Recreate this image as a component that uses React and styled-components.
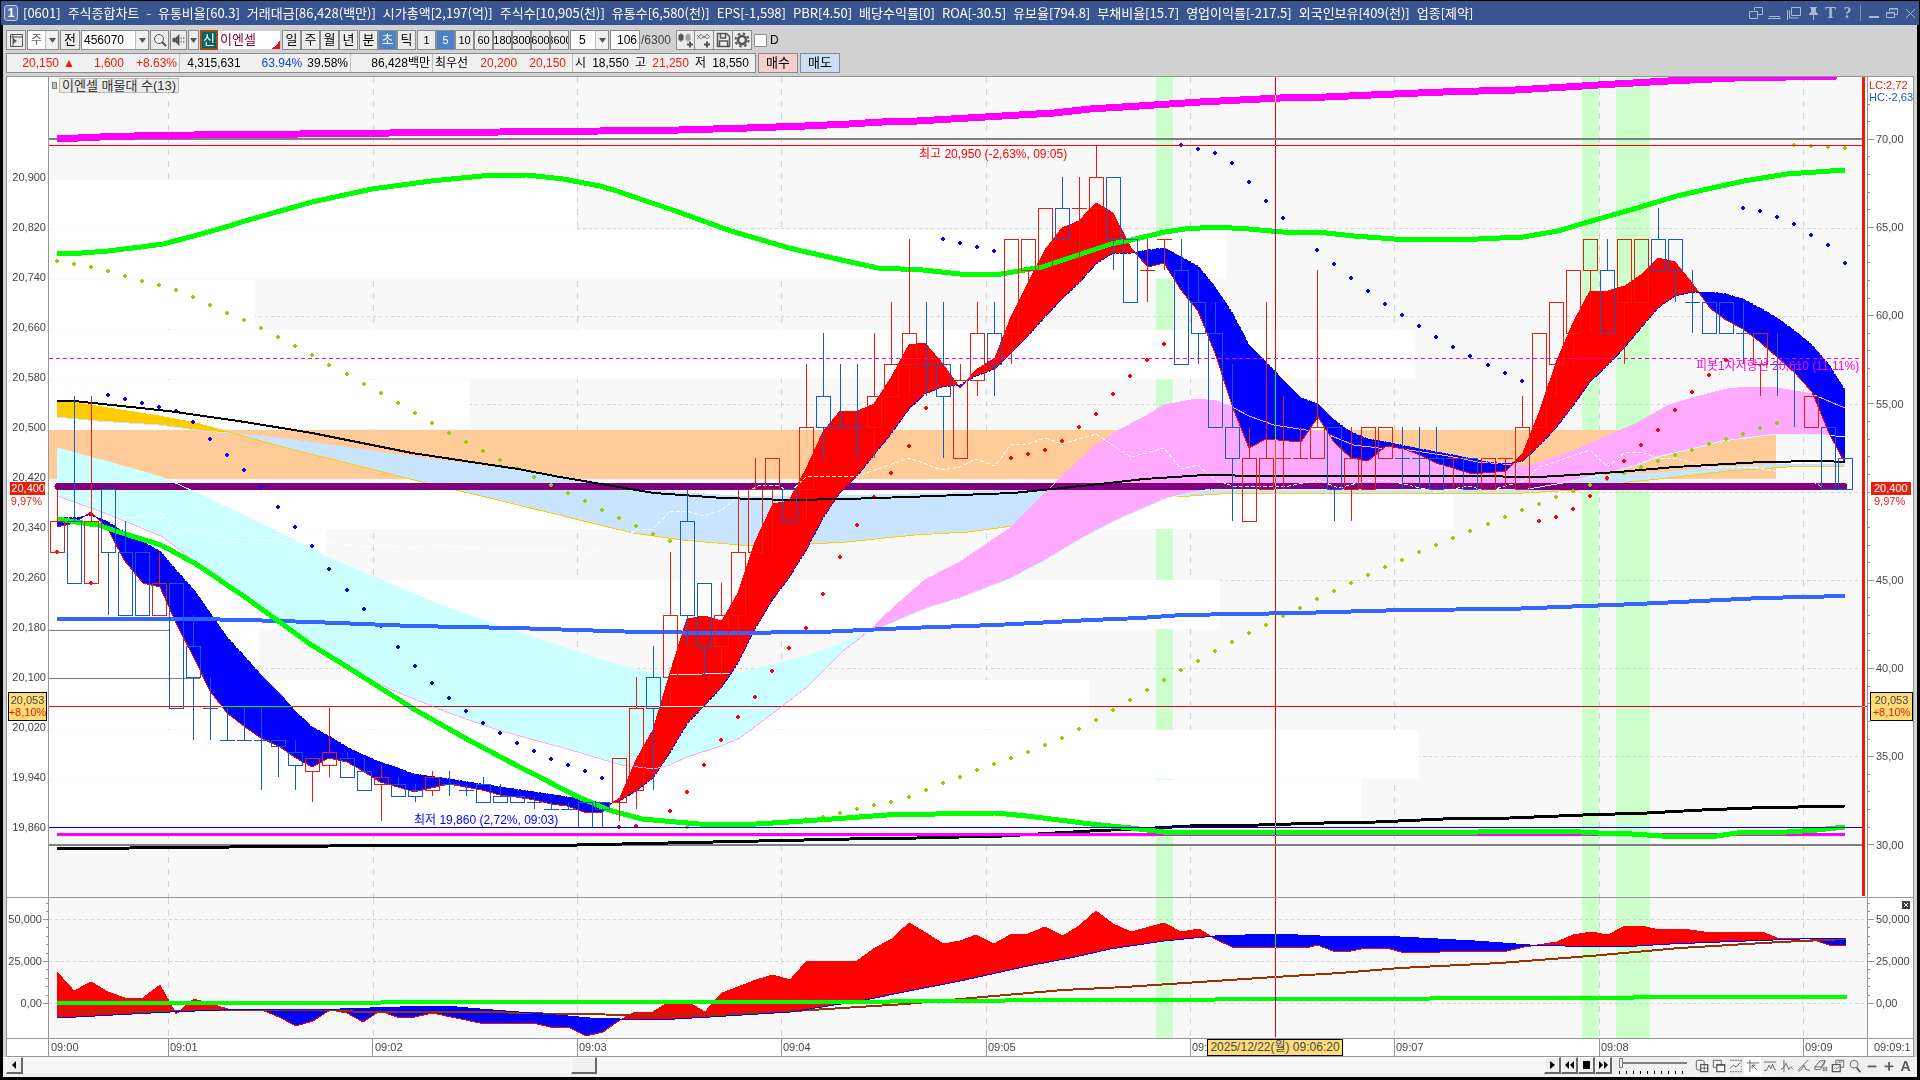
import React, { useState } from 'react'
import styled, { createGlobalStyle, css } from 'styled-components'

// ---------- data ----------

const INFO = ['[0601]', '주식종합차트', '-', '유통비율[60.3]', '거래대금[86,428(백만)]', '시가총액[2,197(억)]', '주식수[10,905(천)]', '유통수[6,580(천)]', 'EPS[-1,598]', 'PBR[4.50]', '배당수익률[0]', 'ROA[-30.5]', '유보율[794.8]', '부채비율[15.7]', '영업이익률[-217.5]', '외국인보유[409(천)]', '업종[제약]']

// color, top, bottom, high, low
const CANDLES = `r 20350 20300 20400 20300|b 20350 20250 20550 20250|r 20350 20250 20550 20250|b 20400 20300 20400 20200|b 20300 20200 20350 20200|b 20300 20200 20300 20200
r 20250 20200 20300 20200|b 20250 20050 20250 20050|b 20150 20100 20200 20000|b 20050 20050 20100 20000|b 20000 20000 20050 20000|b 20000 20000 20050 20000
b 20000 20000 20050 19920|b 20000 19990 20000 19940|b 19980 19960 20000 19920|r 19970 19950 19970 19900|r 19980 19960 20050 19940|b 19970 19940 19980 19940
b 19950 19920 19970 19920|r 19940 19930 19960 19870|b 19930 19910 19940 19910|b 19920 19910 19930 19900|r 19940 19920 19950 19910|b 19930 19930 19950 19910
b 19920 19920 19930 19910|b 19930 19900 19940 19900|b 19910 19900 19930 19900|b 19910 19900 19910 19900|b 19900 19900 19910 19890|b 19890 19890 19900 19890
b 19890 19890 19900 19890|b 19900 19860 19900 19860|b 19900 19890 19900 19860|r 19970 19900 19970 19870|r 20050 19920 20100 19890|b 20100 20050 20150 19920
r 20200 20100 20300 20050|b 20350 20200 20400 20150|b 20250 20150 20250 20100|r 20200 20150 20250 20100|r 20300 20200 20400 20150|r 20400 20300 20450 20300
r 20450 20400 20450 20300|b 20400 20350 20400 20350|r 20500 20400 20600 20350|b 20550 20500 20650 20450|b 20500 20500 20600 20500|b 20500 20500 20600 20450
r 20550 20500 20650 20450|r 20600 20550 20700 20550|r 20650 20600 20800 20550|b 20600 20600 20700 20550|b 20600 20550 20700 20450|r 20575 20450 20600 20450
r 20650 20575 20700 20550|b 20650 20600 20700 20550|r 20800 20650 20800 20600|r 20800 20750 20800 20700|r 20850 20750 20850 20750|b 20850 20800 20900 20800
r 20850 20850 20900 20750|r 20900 20850 20950 20800|b 20900 20800 20900 20750|b 20800 20700 20800 20700|r 20750 20750 20800 20700|r 20800 20800 20800 20750
b 20750 20600 20800 20600|b 20700 20650 20750 20600|b 20650 20500 20700 20500|b 20500 20450 20600 20350|r 20450 20350 20500 20350|r 20450 20400 20700 20400
r 20450 20450 20550 20400|r 20450 20450 20500 20450|r 20500 20450 20750 20450|b 20500 20400 20500 20350|r 20450 20400 20500 20350|r 20500 20400 20500 20400
r 20500 20450 20500 20450|b 20450 20450 20500 20400|b 20450 20450 20500 20400|b 20450 20400 20500 20400|r 20450 20450 20450 20400|b 20450 20400 20450 20400
r 20450 20400 20450 20400|r 20450 20450 20450 20400|r 20500 20400 20550 20400|r 20650 20500 20650 20500|r 20700 20600 20700 20550|r 20750 20650 20750 20600
r 20800 20750 20800 20650|b 20750 20650 20800 20650|r 20800 20700 20800 20600|r 20800 20700 20800 20700|b 20800 20750 20850 20750|b 20800 20750 20800 20700
b 20700 20700 20750 20650|b 20700 20650 20700 20650|b 20700 20650 20700 20650|b 20650 20650 20700 20600|r 20650 20600 20650 20550|b 20600 20600 20650 20550
b 20600 20600 20600 20500|r 20550 20500 20550 20500|b 20500 20400 20500 20400|b 20450 20400 20450 20400`
  .split(/[|\n]/)
  .map((c) => {
    const [color, top, bottom, high, low] = c.trim().split(' ')
    return { color, top: +top, bottom: +bottom, high: +high, low: +low }
  })

const LINES = {
  fast: '57,527 74,523 91,512 108,529 124,560 143,583 160,587 176,623 194,658 210,691 227,713 245,727 261,738 280,747 296,758 312,767 329,758 347,762 363,771 380,782 398,787 414,792 431,788 449,784 465,787 482,790 500,795 516,797 535,800 551,804 567,806 584,812 602,813 612,803 620,798 636,760 653,730 670,673 687,619 704,616 722,621 738,593 755,542 773,504 789,501 807,467 823,432 840,411 858,411 874,404 891,378 909,345 925,343 942,363 960,388 976,370 995,358 1011,317 1028,283 1045,250 1062,228 1079,221 1096,203 1113,213 1131,248 1148,267 1164,263 1181,290 1198,311 1215,353 1233,408 1249,448 1266,439 1301,442 1318,417 1334,442 1351,458 1368,461 1386,446 1404,449 1420,455 1436,463 1453,468 1472,474 1506,471 1523,453 1539,413 1556,363 1573,323 1590,291 1608,291 1625,286 1641,275 1658,258 1675,262 1692,283 1710,308 1726,320 1743,329 1760,342 1777,357 1795,373 1812,392 1829,433 1845,463',
  slow: '57,517 74,518 91,515 108,522 124,532 143,542 160,551 176,570 194,590 210,613 227,637 245,657 261,675 280,694 296,712 312,727 329,736 347,747 363,755 380,762 398,768 414,774 449,779 500,787 535,792 567,797 602,803 612,803 620,801 636,791 653,778 670,753 687,724 704,706 722,687 738,663 755,629 773,599 789,578 807,549 823,518 840,493 858,475 874,455 891,434 909,409 925,394 942,387 960,385 976,376 995,369 1011,353 1028,336 1045,317 1062,299 1079,283 1096,264 1113,253 1131,253 1148,250 1164,248 1181,257 1198,266 1215,287 1233,314 1249,345 1266,362 1283,380 1301,398 1318,404 1334,420 1351,432 1368,439 1386,442 1420,449 1453,455 1488,462 1506,464 1523,461 1539,446 1556,428 1573,406 1590,382 1608,365 1625,347 1641,328 1658,308 1675,296 1692,292 1710,292 1726,294 1743,299 1760,308 1777,318 1795,331 1812,345 1829,365 1845,390',
  gold: '57,401 74,402 102,407 159,416 196,423 229,432 261,441 294,450 347,463 422,482 494,499 571,518 633,533 682,540 740,545 793,545 846,542 915,535 968,532 1013,526 1062,517 1131,504 1172,497 1190,496 1234,493 1289,494 1523,493 1578,490 1630,482 1677,477 1727,471 1787,467 1845,466',
  sky: '57,417 98,421 159,425 204,431 229,433 286,439 408,456 531,472 604,483 674,492 735,496 805,497 870,495 952,493 1013,490 1050,488 1131,481 1200,477 1290,477 1553,478 1608,475 1657,473 1717,467 1787,464 1845,464',
  cyan: '57,448 98,459 161,477 180,485 233,510 294,540 327,557 367,574 433,602 490,623 571,650 601,660 650,673 666,675 740,673 772,665 807,656 838,645 870,631 887,625 927,608 960,598 1009,579 1042,562 1082,538 1119,519 1167,498 1210,489 1289,490 1528,489 1563,483 1608,473 1637,465 1657,457 1687,450 1722,441 1777,434 1817,434 1845,437',
  pink: '57,496 102,512 161,536 180,550 196,563 245,597 310,644 349,668 392,690 449,713 498,730 571,750 621,765 654,769 670,765 687,757 721,746 740,738 772,714 807,687 842,652 870,630 895,606 925,580 960,562 1009,529 1050,488 1074,465 1095,446 1119,430 1148,415 1164,405 1197,399 1217,401 1234,408 1249,416 1274,425 1312,431 1324,433 1354,445 1379,448 1409,450 1448,456 1478,462 1528,466 1553,458 1578,449 1605,437 1637,423 1667,406 1692,398 1727,389 1747,387 1777,388 1812,394 1845,408',
  magenta: '57,139 100,137 134,136 194,135 300,134 390,133 500,132 600,131 679,130 747,128 805,126 849,124 882,122 917,121 968,118 1002,116 1054,113 1090,109 1139,106 1200,102 1280,98 1326,97 1394,94 1443,92 1515,90 1566,87 1598,85 1633,83 1668,81 1735,78 1837,76',
  greenTop: '57,253 82,253 108,251 124,249 141,247 163,244 194,236 229,226 245,221 312,202 372,189 431,181 482,176 527,175 563,179 600,186 617,191 640,199 670,209 731,231 789,248 846,261 878,268 923,270 960,274 995,275 1013,272 1042,267 1078,255 1111,244 1131,240 1165,232 1185,229 1215,227 1249,229 1294,233 1317,232 1354,236 1394,239 1478,239 1523,237 1558,231 1588,222 1637,208 1677,196 1712,188 1744,181 1787,174 1845,170',
  greenLow: '57,519 83,523 98,525 122,533 161,545 196,564 245,597 310,644 349,668 412,708 465,738 510,762 551,783 576,796 609,810 642,819 699,824 740,825 789,822 846,818 887,815 936,814 995,813 1027,816 1091,824 1131,828 1164,832 1478,832 1483,831 1563,831 1598,833 1632,834 1662,836 1717,836 1737,833 1787,832 1817,830 1845,827',
  blackLow: '57,849 130,848 330,846 577,845 759,841 850,839 917,838 1003,836 1090,831 1155,828 1190,826 1259,825 1324,823 1376,822 1443,819 1510,818 1583,815 1647,813 1702,810 1752,808 1845,806',
  blackTop: '57,401 74,401 131,407 176,412 245,422 312,433 412,453 518,469 560,477 654,493 723,498 789,500 846,499 907,497 1013,493 1091,485 1144,479 1205,475 1264,476 1468,476 1538,477 1573,475 1618,472 1675,467 1762,462 1822,461 1845,462',
  blue: '57,619 194,619 245,620 312,622 412,626 514,628 640,632 723,633 821,632 907,628 995,625 1091,620 1140,618 1182,615 1299,613 1404,610 1508,609 1637,604 1762,598 1845,596',
  white: '57,494 91,499 108,507 124,517 143,517 160,512 176,534 194,529 227,539 282,541 302,543 329,542 363,547 382,545 412,548 431,545 465,547 486,550 567,550 588,554 605,548 638,529 653,529 670,511 687,511 704,516 722,510 738,497 760,485 780,486 789,493 807,476 858,476 909,458 942,470 960,467 976,459 995,466 1011,444 1028,444 1045,438 1062,444 1096,434 1131,457 1164,448 1181,469 1198,465 1215,480 1233,486 1289,486 1318,480 1339,488 1368,480 1386,480 1438,492 1468,486 1488,491 1523,481 1539,467 1590,450 1608,467 1625,452 1641,452 1658,458 1675,458 1707,467 1752,467 1787,473 1802,475 1822,487',
  subFast: '57,972 74,991 91,982 108,992 125,998 143,998 160,985 176,1014 194,999 211,1004 228,1009 262,1010 279,1017 296,1026 313,1021 330,1010 347,1013 363,1022 380,1011 397,1017 415,1017 432,1013 480,1023 533,1023 550,1027 568,1027 586,1036 603,1032 620,1020 635,1012 653,1012 669,1002 688,1002 705,1012 722,993 738,987 756,980 773,975 790,980 807,961 857,961 875,948 892,939 909,923 926,933 943,944 960,941 976,935 994,944 1012,934 1028,934 1045,927 1063,936 1079,926 1096,911 1113,924 1131,932 1164,923 1181,932 1199,929 1215,939 1232,947 1310,947 1317,945 1333,951 1351,951 1366,948 1387,948 1401,952 1440,952 1460,951 1480,952 1507,951 1524,947 1557,942 1573,935 1591,932 1608,935 1625,926 1641,926 1655,929 1683,929 1704,932 1762,932 1777,938 1807,938 1817,941 1829,945 1846,945',
  subSlow: '57,1018 170,1012 245,1009 340,1009 400,1007 445,1006 480,1009 545,1014 590,1018 620,1019 675,1019 710,1017 790,1012 860,1001 909,991 960,981 1028,966 1075,957 1110,949 1164,941 1215,936 1275,934 1320,936 1400,937 1475,941 1530,945 1565,946 1637,946 1670,944 1720,942 1800,939 1846,938',
  brown: '57,1011 330,1010 360,1012 490,1012 560,1014 650,1015 735,1014 778,1012 827,1009 906,1004 960,999 1063,990 1125,987 1200,982 1275,977 1340,973 1400,968 1500,963 1590,956 1680,948 1780,942 1846,939',
  subGreen: '57,1003 380,1003 382,1002 880,1002 900,1001 1113,1000 1320,999 1540,998 1727,997 1847,997',
}

// [first bar, y, y, y ...]
const DOTS = {
  '#99cc00': [
    [0, 261, 264, 267, 271, 276, 281, 285, 290, 297, 305, 313, 320, 328, 337, 346, 355, 365, 374, 384, 393, 403, 413, 423, 433, 442, 451, 460, 468, 477, 485, 493, 501, 510, 518, 526, 534, 541, 827],
    [43, 821, 819, 817, 813, 809, 805, 802, 797, 790, 783, 777, 770, 764, 758, 752, 745, 738, 729, 720, 710, 700, 690, 680, 670, 661, 651, 642, 633, 625, 616, 608, 599, 591, 583, 575, 567, 560, 552, 545, 538, 531, 524, 517, 510, 504, 497, 491, 485, 479, 473, 467, 461, 455, 450, 444, 439, 434, 428, 423, 145, 146, 147, 148],
  ],
  '#0000ff': [
    [3, 395, 399, 403, 407, 411, 422, 439, 455, 470, 487, 507, 527, 546, 569, 590, 609, 626, 647, 666, 683, 698, 711, 723, 733, 743, 751, 759, 765, 771, 778],
    [52, 239, 243, 247, 251],
    [66, 145, 149, 153, 163, 182, 201, 218, 233, 250, 264, 278, 291, 304, 315, 326, 337, 347, 356, 365, 373, 381],
    [99, 208, 211, 217, 224, 235, 245, 263],
  ],
  '#ff0000': [
    [0, 552],
    [2, 583],
    [33, 827, 826, 819, 811, 792, 765, 740, 717, 697, 671, 648, 628, 594, 557, 525, 497, 473, 446, 408],
    [56, 458, 454, 450, 441, 427, 414, 394, 376, 360, 344],
    [87, 521, 517, 509, 496, 478, 461, 445, 430, 410, 392, 375, 360],
  ],
}

// volume by price: top, height, right edge
const PROFILE = [
  [180, 49, 577],
  [230, 49, 1226],
  [280, 49, 255],
  [330, 49, 1415],
  [380, 49, 470],
  [430, 49, 1776, '#ffcc99'],
  [480, 49, 1453],
  [530, 49, 326],
  [580, 49, 1220],
  [630, 49, 259],
  [680, 49, 1089],
  [730, 49, 1419],
  [780, 48, 1361],
]

const MINUTES = [168, 373, 577, 781, 986, 1190, 1394, 1599, 1803]
const SIGNALS = [
  [1156, 17],
  [1582, 17],
  [1616, 34],
]

const LEFT = 49
const WIDTH = 1818
const MAIN = { top: 77, height: 820 }
const SUB = { top: 898, height: 140 }

const barX = (i) => Math.round(57 + i * 17.03)
const priceY = (p) => Math.round(145.3 + (20950 - p) * 0.6257)
const pctX = (x) => `${((x - LEFT) / WIDTH) * 100}%`
const pctY = (pane, y) => `${((y - pane.top) / pane.height) * 100}%`

const sample = (str) => {
  const pts = str.split(' ').map((p) => p.split(',').map(Number))
  const out = []
  let k = 0
  for (let x = pts[0][0]; x <= pts[pts.length - 1][0]; x++) {
    while (k < pts.length - 2 && pts[k + 1][0] < x) k++
    const [x0, y0] = pts[k]
    const [x1, y1] = pts[k + 1]
    out.push([x, y0 + ((y1 - y0) * (x - x0)) / (x1 - x0)])
  }
  return out
}

// area between the two lines, only where the first one is on top
const areaPath = (upper, lower) => {
  const a = sample(upper)
  const b = sample(lower)
  let d = ''
  let run = []
  const flush = () => {
    if (run.length > 1) {
      const top = run.map(([x, y]) => `${x},${y.toFixed(1)}`)
      const bottom = run.map(([x, , y]) => `${x},${y.toFixed(1)}`).reverse()
      d += `M${top.join('L')}L${bottom.join('L')}Z`
    }
    run = []
  }
  for (let i = 0; i < Math.min(a.length, b.length); i++) {
    if (a[i][1] <= b[i][1]) run.push([a[i][0], a[i][1], b[i][1]])
    else flush()
  }
  flush()
  return d
}

// ---------- chart ----------

const Line = ({ name, color, w = 1, dash }) => (
  <polyline points={LINES[name]} fill="none" stroke={color} strokeWidth={w} strokeDasharray={dash} strokeLinejoin="round" />
)

const Cloud = ({ a, b, up, down }) => (
  <>
    <path d={areaPath(LINES[a], LINES[b])} fill={up} />
    <path d={areaPath(LINES[b], LINES[a])} fill={down} />
  </>
)

const Backdrop = ({ pane, rows }) => (
  <>
    <rect x={LEFT} y={pane.top} width={WIDTH} height={pane.height} fill="#f8f8f8" />
    {SIGNALS.map(([x, w]) => (
      <rect key={x} x={x} y={pane.top} width={w} height={pane.height} fill="#ccffcc" />
    ))}
    {MINUTES.map((x) => (
      <path key={x} d={`M${x + 0.5} ${pane.top}v${pane.height}`} stroke="#d3d3d3" strokeDasharray="6 6" />
    ))}
    {rows.map((y) => (
      <path key={y} d={`M${LEFT} ${y + 0.5}h${WIDTH}`} stroke="#d3d3d3" strokeDasharray="3 3" />
    ))}
  </>
)

const Candle = ({ i, c }) => {
  const x = barX(i)
  const top = priceY(c.top)
  const bottom = priceY(c.bottom)
  const cx = x + 0.5
  return (
    <g stroke={c.color === 'r' ? '#e61e0a' : '#145ac8'} fill="none">
      {c.high > c.top && <path d={`M${cx} ${priceY(c.high)}V${top}`} />}
      {c.low < c.bottom && <path d={`M${cx} ${bottom}V${priceY(c.low)}`} />}
      {top === bottom ? <path d={`M${x - 7} ${top + 0.5}h15`} /> : <rect x={x - 6.5} y={top + 0.5} width={14} height={bottom - top} />}
    </g>
  )
}

const Crosshair = styled.path`
  fill: none;
  stroke: #00f8f8;
  mix-blend-mode: difference;
`

const MainPlot = () => (
  <Plot role="img" aria-label="이엔셀 5초봉 차트">
    <svg viewBox={`${LEFT} ${MAIN.top} ${WIDTH} ${MAIN.height}`} preserveAspectRatio="none" shapeRendering="crispEdges">
      <Backdrop pane={MAIN} rows={[228, 316, 404, 492, 580, 668, 756]} />
      {PROFILE.map(([y, h, right, fill]) => (
        <rect key={y} x={LEFT} y={y} width={right - LEFT} height={h} fill={fill || '#fff'} />
      ))}
      <path d="M49 630.5h120M49 678.5h151" stroke="#808080" />
      <path d="M49 139h1813M49 845h1813" stroke="#808080" strokeWidth="2" />
      <Cloud a="gold" b="sky" up="#ffcc00" down="#c8e4ff" />
      <Line name="sky" color="#c8e4ff" />
      <Line name="gold" color="#ffcc00" />
      <Cloud a="pink" b="cyan" up="#ffaaff" down="#ccffff" />
      <path d="M58 486.5H1844" stroke="#800080" strokeWidth="7" strokeLinecap="round" />
      <Cloud a="fast" b="slow" up="#ff0000" down="#0000ff" />
      <Line name="pink" color="#ffaaff" />
      <Line name="cyan" color="#ccffff" />
      <Line name="fast" color="#ff0000" />
      <Line name="slow" color="#0000ff" dash="3 1" />
      <Line name="white" color="#fff" dash="4 2" />
      {Object.entries(DOTS).map(([color, runs]) =>
        runs.map(([first, ...ys]) =>
          ys.map((y, k) => <path key={`${color}${first + k}`} d={`M${barX(first + k) - 2} ${y - 1}h1v-1h2v1h1v2h-1v1h-2v-1h-1z`} fill={color} />)
        )
      )}
      <Line name="blackTop" color="#000" w={2} />
      <Line name="blackLow" color="#000" w={3} />
      <Line name="blue" color="#3366ff" w={4} />
      <path d="M57 834.5H1845" stroke="#ff00ff" strokeWidth="3" />
      <Line name="magenta" color="#ff00ff" w={7} />
      <Line name="greenTop" color="#00ff00" w={5} />
      <Line name="greenLow" color="#00ff00" w={5} />
      {CANDLES.map((c, i) => (
        <Candle key={i} i={i} c={c} />
      ))}
      <path d="M49 358.5H1862" stroke="#ff00dc" strokeDasharray="4 3" />
      <path d="M49 145.5H1862" stroke="#ff0000" />
      <path d="M49 827.5H1862" stroke="#0000e6" />
      <rect x="1862" y="77" width="3" height="819" fill="#e61e0a" />
      <Crosshair d="M49 706.5H1867M1275.5 77V897" />
    </svg>
    <text x={pctX(919)} y={pctY(MAIN, 158)} fill="#ff0000">최고 20,950 (-2,63%, 09:05)</text>
    <text x={pctX(414)} y={pctY(MAIN, 824)} fill="#0000ff">최저 19,860 (2,72%, 09:03)</text>
    <text x={pctX(1696)} y={pctY(MAIN, 370)} fill="#ff00dc">피봇1차저항선 20,610 (11,11%)</text>
  </Plot>
)

const SubPlot = () => (
  <Plot role="img" aria-label="보조지표">
    <svg viewBox={`${LEFT} ${SUB.top} ${WIDTH} ${SUB.height}`} preserveAspectRatio="none" shapeRendering="crispEdges">
      <Backdrop pane={SUB} rows={[919, 961, 1003]} />
      <Cloud a="subFast" b="subSlow" up="#ff0000" down="#0000ff" />
      <Line name="subFast" color="#ff0000" />
      <Line name="brown" color="#993300" w={2} />
      <Line name="subSlow" color="#0000ff" />
      <Line name="subGreen" color="#00ff00" w={4} />
      <Crosshair d="M1275.5 898V1037" />
    </svg>
  </Plot>
)

const PRICES = [20900, 20820, 20740, 20660, 20580, 20500, 20420, 20340, 20260, 20180, 20100, 20020, 19940, 19860]
const SUB_TICKS = [['50,000', 919], ['25,000', 961], ['0,00', 1003]]
const SUB_MINOR = [903, 911, 927, 936, 944, 953, 969, 978, 986, 995]

const PriceAxis = () => (
  <AxisSvg>
    {PRICES.map((p) => (
      <text key={p} x="39" y={pctY(MAIN, priceY(p) + 4)} textAnchor="end">{p.toLocaleString('en-US')}</text>
    ))}
  </AxisSvg>
)

const ScaleAxis = () => (
  <AxisSvg>
    {[70, 65, 60, 55, 45, 40, 35, 30].map((v) => {
      const y = 139 + (70 - v) * 17.64
      return (
        <g key={v}>
          <line x1="0" x2="6" y1={pctY(MAIN, y)} y2={pctY(MAIN, y)} />
          <text x="8" y={pctY(MAIN, y + 4)}>{v},00</text>
        </g>
      )
    })}
    {Array.from({ length: 43 }, (_, k) => 104 + k * 17.64).map((y) => (
      <line key={y} x1="0" x2="2" y1={pctY(MAIN, y)} y2={pctY(MAIN, y)} />
    ))}
    <text x="1" y={pctY(MAIN, 89)} className="up">LC:2,72</text>
    <text x="1" y={pctY(MAIN, 101)} className="down">HC:-2,63</text>
  </AxisSvg>
)

const SubAxis = ({ side }) => {
  const left = side === 'left'
  return (
    <AxisSvg>
      {SUB_TICKS.map(([t, y]) => (
        <g key={t}>
          <line x1={left ? 36 : 0} x2={left ? 41 : 6} y1={pctY(SUB, y)} y2={pctY(SUB, y)} />
          <text x={left ? 35 : 8} y={pctY(SUB, y + 4)} textAnchor={left ? 'end' : 'start'}>{t}</text>
        </g>
      ))}
      {SUB_MINOR.map((y) => (
        <line key={y} x1={left ? 39 : 0} x2={left ? 41 : 2} y1={pctY(SUB, y)} y2={pctY(SUB, y)} />
      ))}
    </AxisSvg>
  )
}

const TimeAxis = () => (
  <AxisSvg>
    {[LEFT, ...MINUTES].map((x, i) => (
      <g key={x}>
        {i > 0 && <line x1={pctX(x)} x2={pctX(x)} y1="0" y2="100%" />}
        <text x={pctX(x + 2)} y="12">09:0{i}</text>
      </g>
    ))}
  </AxisSvg>
)

// ---------- icons ----------

const Icon = ({ children, size = 16 }) => (
  <svg width={size} height={size} viewBox="0 0 16 16" fill="none" stroke="currentColor" aria-hidden="true">
    {children}
  </svg>
)

const Down = () => (
  <svg width="7" height="5" viewBox="0 0 7 5" aria-hidden="true"><path d="M0 0h7L3.500 5z" fill="#555" /></svg>
)

const TITLE_ICONS = [
  ['새 창', <path d="M6.500 5.500v-3h8v7h-5M1.500 6.500h8v7h-8z" />],
  ['숨기기', <path d="M2 11.500h11M1 13.500h13" />],
  ['복제', <path d="M5.500 2.500h9v8h-9zM3.500 5v8h9M1.500 5v10" />],
  ['고정', <path d="M5 2h7v1h-1v4l2 2v1H4V9l2-2V3H5zM8 10h1v5H8z" fill="currentColor" stroke="none" />],
]

const TOOL_ICONS = [
  ['차트 추가', <><rect x="1.500" y="1.500" width="9" height="11" rx="2" /><path d="M6.500 6.500h8v8h-8z" fill="#fff" strokeWidth="1.500" /><path d="M10.500 6v8M6 10.500h8" /></>],
  ['겹치기', <><path d="M1.500 1.500h9v8h-9z" /><path d="M5.500 6.500h9v8h-9z" fill="#fff" strokeWidth="1.500" /><path d="M6 7.500h8" /></>],
  ['영역 선택', <><path d="M1 1.500h14M1 14.500h14" strokeDasharray="2 1" /><path d="M1 11l4-4 3 2 5-5" /><path d="M14 2v12" strokeDasharray="1 2" /></>],
  ['십자선', <path d="M4.500 1v14M1 4.500h14M7 7l6 6M7 11V7h4" />, true],
  ['수평선', <path d="M1 3.500h14M1 13h3l3-6 2 4 2-5 2 6h2" />],
  ['수직선', <path d="M4.500 1v14M1 12l3-2 3-5 3 7 2-3 3 3" />],
  ['추세선', <path d="M1 13L13 1M2 14l3-2 3-5 2 5 5 1" />],
  ['모두 지우기', <path d="M1 9l6-7h6l-5 7zM1 9v3h6l5-7V2M10.500 9v5M12.500 9v5M14.500 9v5" />],
  ['화면 저장', <><path d="M5.500 1.500h9v8h-9z" /><path d="M1.500 6.500h9v8h-9z" fill="#fff" strokeWidth="1.500" /><path d="M3 12l2-2 2 1 2-2M7 5l2-2 2 1 2-2" /></>],
  ['확대경', <><circle cx="7" cy="6" r="4.500" /><path d="M10 10l4 5" strokeWidth="2" /></>],
  ['축소', <path d="M3 8.500h10" strokeWidth="2" />],
  ['확대', <path d="M3 8.500h10M8 3.500v10" strokeWidth="2" />],
]

// ---------- page ----------

const App = () => {
  const [unit, setUnit] = useState('초')
  const [count, setCount] = useState('5')
  const [checked, setChecked] = useState(false)

  return (
    <Frame>
      <Global />
      <TitleBar>
        <Badge>1</Badge>
        <h1>{INFO.map((t) => <span key={t}>{t}</span>)}</h1>
        <TitleTools>
          {TITLE_ICONS.map(([label, icon]) => (
            <button key={label} aria-label={label}><Icon>{icon}</Icon></button>
          ))}
          <button className="glyph">T</button>
          <button className="glyph">?</button>
          <i />
          <button aria-label="최소화"><Icon><path d="M3 12h10" strokeWidth="2" /></Icon></button>
          <button aria-label="이전 크기로"><Icon><path d="M5.500 6V3.500h8v6H11M5 4h9M2.500 7.500h8v5h-8zM2 8h9" /></Icon></button>
          <button aria-label="닫기"><Icon><path d="M4 4l9 9M13 4l-9 9" /></Icon></button>
        </TitleTools>
      </TitleBar>

      <Body>
        <Toolbar>
          <Tool aria-label="메뉴"><Icon><path d="M2.500 2.500h12v12h-12zM5 3v11M2 5h12" /><path d="M5 6l4 3-4 3z" fill="currentColor" stroke="none" /></Icon></Tool>
          <Combo $w={32}>
            <select aria-label="종목 구분" className="dim"><option>주</option></select>
            <span><Down /></span>
          </Combo>
          <Tool $w={20} className="text">전</Tool>
          <Combo $w={68}>
            <input aria-label="종목코드" defaultValue="456070" />
            <span><Down /></span>
          </Combo>
          <Tool aria-label="종목 검색" $w={19}><Icon><circle cx="7" cy="7" r="4.500" /><path d="M10 10l4 4" strokeWidth="2" /></Icon></Tool>
          <Tool aria-label="음성" $w={17}><Icon size={14}><path d="M1 6h3l4-4v12l-4-4H1z" fill="currentColor" /><path d="M10.500 5v6M13.500 5v6" strokeDasharray="2 2" /></Icon></Tool>
          <Tool aria-label="음성 옵션" $w={11}><Down /></Tool>
          <StockName><b>신</b><span>이엔셀</span></StockName>

          <Group>
            {['일', '주', '월', '년'].map((t) => (
              <Seg key={t} $on={unit === t} onClick={() => setUnit(t)}>{t}</Seg>
            ))}
          </Group>
          <Group>
            {['분', '초', '틱'].map((t) => (
              <Seg key={t} $on={unit === t} onClick={() => setUnit(t)}>{t}</Seg>
            ))}
          </Group>
          <Group>
            {['1', '5', '10', '60', '180', '300', '600', '3600'].map((t) => (
              <Seg key={t} $num $on={count === t} onClick={() => setCount(t)}>{t}</Seg>
            ))}
          </Group>
          <Combo $w={39}>
            <select aria-label="주기"><option>5</option></select>
            <span><Down /></span>
          </Combo>
          <Combo $w={30} $end><input aria-label="표시 봉수" defaultValue="106" /></Combo>
          <Total>/6300</Total>
          <Group>
            <Tool aria-label="종목 추가" $w={19}><Icon><path d="M1 3h4v5H1zM3 1v9" fill="currentColor" /><path d="M8 3h4v5H8zM10 1v9" opacity="0.5" fill="currentColor" /><path d="M9 12.500h6M12 9.500v6" strokeWidth="2" /></Icon></Tool>
            <Tool aria-label="지표 추가" $w={19}><Icon><path d="M1 7l4-5 3 4 3-4 3 3M1 3l4 4 3-3 3 3 3-3" opacity="0.7" /><path d="M8 12.500h6M11 9.500v6" strokeWidth="2" /></Icon></Tool>
            <Tool aria-label="저장" $w={19}><Icon><path d="M2.500 1.500h9l3 3v10h-12zM5.500 2v4h5V2M4.500 14V9h8v5" strokeWidth="1.500" /></Icon></Tool>
            <Tool aria-label="설정" $w={19}><Icon><circle cx="8" cy="8" r="4" strokeWidth="2.500" /><circle cx="8" cy="8" r="6.500" strokeDasharray="2.500 2.600" strokeWidth="2" /></Icon></Tool>
          </Group>
          <Check>
            <input type="checkbox" checked={checked} onChange={() => setChecked(!checked)} />D
          </Check>
        </Toolbar>

        <QuoteRow>
          <Quote>
            <Cell $w={172}><em className="up">20,150</em><em className="up arrow">▲</em><em className="up">1,600</em><em className="up">+8.63%</em></Cell>
            <Cell $w={171} $gap={5}><em className="volume">4,315,631</em><em className="down">63.94%</em><em>39.58%</em></Cell>
            <Cell $w={82}><em>86,428백만</em></Cell>
            <Cell $w={140} $between><em>최우선</em><em className="up">20,200</em><em className="up">20,150</em></Cell>
            <Cell $w={183} $between><em>시</em><em>18,550</em><em>고</em><em className="up">21,250</em><em>저</em><em>18,550</em></Cell>
          </Quote>
          <Order $bg="#f5d0cb">매수</Order>
          <Order $bg="#c8dff5">매도</Order>
        </QuoteRow>

        <Chart>
          <Pane><PriceAxis />
            <Tag $top={pctY(MAIN, 482)} $left={3} $w={35} $end className="last">20,400</Tag>
            <Tag $top={pctY(MAIN, 495)} $left={3} $w={32} $end className="rate">9,97%</Tag>
            <CrossTag $top={pctY(MAIN, 692)} $left={1}><span>20,053</span><span className="up">+8,10%</span></CrossTag>
          </Pane>
          <Pane>
            <MainPlot />
            <Legend><i /><button>이엔셀 매물대 수(13)</button></Legend>
          </Pane>
          <Pane><ScaleAxis />
            <Tag $top={pctY(MAIN, 482)} $left={3} $w={40} className="last">20,400</Tag>
            <Tag $top={pctY(MAIN, 495)} $left={3} $w={40} className="rate">9,97%</Tag>
            <CrossTag $top={pctY(MAIN, 692)} $left={2} $wide><span>20,053</span><span className="up">+8,10%</span></CrossTag>
          </Pane>

          <Pane><SubAxis side="left" /></Pane>
          <Pane><SubPlot /></Pane>
          <Pane><SubAxis side="right" /><Close aria-label="지표 닫기"><svg width="8" height="8"><path d="M2 2l4 4M6 2L2 6" stroke="#fff" /></svg></Close></Pane>

          <Pane />
          <Pane><TimeAxis /><TimeTag>2025/12/22(월) 09:06:20</TimeTag></Pane>
          <Pane><AxisSvg><text x="6" y="12">09:09:1</text></AxisSvg></Pane>
        </Chart>

        <Footer>
          <Raised aria-label="왼쪽으로" $w={17}><svg width="4" height="8"><path d="M4 0v8L0 4z" /></svg></Raised>
          <Track><Thumb aria-label="스크롤 위치" /></Track>
          <Player>
            <Raised aria-label="재생" $w={17}><svg width="5" height="8"><path d="M0 0v8l5-4z" /></svg></Raised>
            <Raised aria-label="뒤로" $w={17}><svg width="9" height="8"><path d="M4 0v8L0 4zM9 0v8L5 4z" /></svg></Raised>
            <Raised aria-label="정지" $w={17}><svg width="7" height="8"><path d="M0 0h7v8H0z" /></svg></Raised>
            <Raised aria-label="앞으로" $w={17}><svg width="9" height="8"><path d="M0 0v8l4-4zM5 0v8l4-4z" /></svg></Raised>
          </Player>
          <Speed type="range" aria-label="재생 속도" defaultValue="0" />
          <Tools>
            {TOOL_ICONS.map(([label, icon, on]) => (
              <ToolIcon key={label} aria-label={label} $on={on}><Icon size={14}>{icon}</Icon></ToolIcon>
            ))}
            <ToolIcon>A</ToolIcon>
          </Tools>
        </Footer>
      </Body>
    </Frame>
  )
}

const Global = createGlobalStyle`
  * {
    box-sizing: border-box;
  }

  body {
    margin: 0;
    background: #000;
    font-family: "Liberation Sans", "Noto Sans CJK KR", sans-serif;
    font-size: 12px;
    line-height: 16px;
    color: #000;
  }

  button, input, select {
    font: inherit;
    color: inherit;
    margin: 0;
    padding: 0;
    border: none;
    border-radius: 0;
    outline: none;
    background: transparent;
  }

  .up {
    color: #e61e0a;
    fill: #e61e0a;
  }

  .down {
    color: #1446c8;
    fill: #145ac8;
  }
`

const Frame = styled.div`
  display: flex;
  flex-direction: column;
  min-height: 100vh;
  padding: 1px 1px 3px;
  background: #000;
`

const TitleBar = styled.header`
  display: flex;
  align-items: center;
  height: 24px;
  padding-left: 3px;
  background: #39558f;
  color: #fff;

  h1 {
    display: flex;
    flex: 1;
    gap: 7px;
    margin: 0 0 0 5px;
    font-family: "Noto Sans CJK KR", sans-serif;
    font-size: 13px;
    font-weight: normal;
    line-height: 20px;
    white-space: nowrap;
  }
`

const Badge = styled.span`
  width: 14px;
  height: 16px;
  border: 1px solid #c3cee6;
  border-radius: 3px;
  background: #5a74ad;
  font-weight: bold;
  line-height: 14px;
  text-align: center;
`

const TitleTools = styled.div`
  display: flex;
  align-items: center;
  color: #a9b7d6;

  button {
    display: flex;
    align-items: center;
    justify-content: center;
    width: 19px;
    height: 20px;
  }

  .glyph {
    width: 17px;
    font: bold 16px/20px "Liberation Serif", serif;
  }

  i {
    width: 1px;
    height: 16px;
    margin: 0 4px;
    background: #8293b8;
  }

  i ~ button {
    width: 18px;
  }
`

const Body = styled.main`
  display: flex;
  flex: 1;
  flex-direction: column;
  margin: 0 2px;
  padding: 5px 3px 0;
  background: #d1d1d1;
`

const Toolbar = styled.div`
  display: flex;
  gap: 1px;
  height: 20px;
  margin-bottom: 3px;
`

const boxed = css`
  border: 1px solid #8c8c8c;
  background: #fff;
`

const Tool = styled.button`
  ${boxed}
  display: flex;
  flex-shrink: 0;
  align-items: center;
  justify-content: center;
  width: ${({ $w }) => $w || 20}px;
  height: 20px;
  background: #ececec;
  color: #555;

  &.text {
    color: #000;
    font-size: 13px;
  }
`

const Combo = styled.div`
  ${boxed}
  display: flex;
  flex-shrink: 0;
  width: ${({ $w }) => $w}px;

  input, select {
    flex: 1;
    min-width: 0;
    padding: 0 2px;
    appearance: none;
    text-align: ${({ $end }) => ($end ? 'right' : 'left')};
  }

  select {
    padding-left: 8px;
  }

  .dim {
    padding-left: 3px;
    color: #666;
  }

  span {
    display: flex;
    align-items: center;
    justify-content: center;
    width: 13px;
    border-left: 1px solid #c0c0c0;
    background: #f0f0f0;
  }
`

const StockName = styled.div`
  ${boxed}
  display: flex;
  width: 81px;
  flex-shrink: 0;
  border-color: #c8c8c8;
  font-size: 13px;
  line-height: 18px;
  color: #800040;
  background: linear-gradient(135deg, transparent 50%, #dc1428 50%) right bottom / 8px 8px no-repeat #fff;

  b {
    width: 18px;
    margin: -1px 2px -1px -1px;
    border: 2px solid #a04b14;
    background: #0a6464;
    color: #fff;
    font-weight: normal;
    line-height: 16px;
    text-align: center;
  }
`

const Group = styled.div`
  display: flex;
  flex-shrink: 0;

  & > * + * {
    border-left: none;
  }
`

const Seg = styled.button`
  ${boxed}
  display: flex;
  align-items: center;
  justify-content: center;
  width: 19px;
  height: 20px;
  overflow: hidden;
  background: ${({ $on }) => ($on ? '#4b82c8' : '#ececec')};
  color: ${({ $on }) => ($on ? '#fff' : '#000')};
  font-size: ${({ $num }) => ($num ? 11 : 13)}px;
`

const Total = styled.span`
  width: 34px;
  line-height: 20px;
  color: #444;
`

const Check = styled.label`
  display: flex;
  align-items: center;
  gap: 3px;
  margin-left: 1px;

  input {
    width: 13px;
    height: 13px;
    border: 1px solid #909090;
    appearance: none;
    background: #fff;
  }

  input:checked {
    background: #4b82c8;
  }
`

const QuoteRow = styled.div`
  display: flex;
  gap: 2px;
  height: 20px;
  margin-bottom: 3px;
`

const Quote = styled.div`
  display: flex;
  flex-shrink: 0;
  border: 1px solid #8c8c8c;
  background: #f0f0f0;
  white-space: nowrap;
`

const Cell = styled.div`
  display: flex;
  align-items: center;
  justify-content: ${({ $between }) => ($between ? 'space-between' : 'flex-end')};
  gap: ${({ $between, $gap }) => ($between ? 0 : $gap || 12)}px;
  width: ${({ $w }) => $w}px;
  padding: 0 ${({ $between }) => ($between ? 6 : 2)}px 0 2px;

  & + & {
    border-left: 1px solid #c0c0c0;
  }

  em {
    font-style: normal;
  }

  .arrow {
    margin: 0 7px 0 -8px;
  }

  .volume {
    margin-right: 16px;
  }
`

const Order = styled.button`
  ${boxed}
  width: 40px;
  background: ${({ $bg }) => $bg};
  font-size: 13px;
`

const Chart = styled.section`
  display: grid;
  flex: 1;
  grid-template-columns: 43px 1fr 47px;
  grid-template-rows: 821fr 141fr 18px;
  min-height: 600px;
  border-top: 1px solid #969696;
`

const Pane = styled.div`
  position: relative;
  min-width: 0;
  min-height: 0;
  border-bottom: 1px solid #969696;
  background: #fff;
  overflow: hidden;

  &:nth-child(3n + 1),
  &:nth-child(3n) {
    border-left: 1px solid #969696;
    border-right: 1px solid #969696;
  }
`

const Plot = styled.svg`
  position: absolute;
  inset: 0;
  width: 100%;
  height: 100%;

  svg {
    width: 100%;
    height: 100%;
  }
`

const AxisSvg = styled.svg`
  position: absolute;
  inset: 0;
  width: 100%;
  height: 100%;
  fill: #464646;
  font-size: 11px;
  shape-rendering: crispEdges;

  line {
    stroke: #969696;
  }
`

const Tag = styled.div`
  position: absolute;
  top: ${({ $top }) => $top};
  left: ${({ $left }) => $left}px;
  display: flex;
  justify-content: ${({ $end }) => ($end ? 'flex-end' : 'flex-start')};
  width: ${({ $w }) => $w}px;
  height: 13px;
  padding: 0 ${({ $end }) => ($end ? 0 : 3)}px;
  font-size: 11px;
  line-height: 13px;

  &.last {
    background: #e61e0a;
    color: #fff;
  }

  &.rate {
    color: #e61e0a;
  }
`

const CrossTag = styled.div`
  position: absolute;
  top: ${({ $top }) => $top};
  left: ${({ $left }) => $left}px;
  display: flex;
  flex-direction: column;
  align-items: center;
  width: ${({ $wide }) => ($wide ? 43 : 39)}px;
  height: 29px;
  padding: 1px 0;
  border: 1px solid #000;
  background: #ffdc78;
  font-size: 11px;
  line-height: 12px;
  color: #464646;
`

const Legend = styled.div`
  position: absolute;
  top: 1px;
  left: 3px;
  display: flex;
  align-items: center;
  gap: 2px;

  i {
    width: 5px;
    height: 7px;
    border: 1px solid #808080;
    background: #c0c0c0;
  }

  button {
    width: 120px;
    height: 15px;
    border: 1px solid #b9b9b9;
    background: #ebebeb;
    color: #333;
    font-size: 13px;
    line-height: 13px;
    white-space: nowrap;
  }
`

const Close = styled.button`
  position: absolute;
  top: 3px;
  right: 3px;
  display: flex;
  width: 8px;
  height: 8px;
  background: #404040;
`

const TimeTag = styled.div`
  position: absolute;
  top: 0;
  left: ${pctX(1207)};
  width: 136px;
  height: 17px;
  border: 1px solid #000;
  background: #ffdc78;
  color: #464646;
  line-height: 15px;
  text-align: center;
  white-space: nowrap;
`

const Footer = styled.footer`
  display: flex;
  align-items: flex-start;
  height: 20px;
  margin: 0 -3px;
  padding: 0 3px;
  background: #f0f0f0;
`

const Raised = styled.button`
  display: flex;
  flex-shrink: 0;
  align-items: center;
  justify-content: center;
  width: ${({ $w }) => $w}px;
  height: 17px;
  border: 1px solid #fff;
  border-right: 2px solid #696969;
  border-bottom: 2px solid #696969;
  background: #f0f0f0;
`

const Track = styled.div`
  display: flex;
  flex: 1;
  height: 17px;
  background: #f7f7f7;
`

const Thumb = styled.button`
  width: 26px;
  margin-left: 36%;
  border: 1px solid #fff;
  border-right: 2px solid #696969;
  border-bottom: 2px solid #696969;
  background: #f0f0f0;
`

const Player = styled.div`
  display: flex;
`

const Speed = styled.input`
  width: 68px;
  height: 17px;
  margin: 0 6px 0 7px;
  appearance: none;
  background:
    linear-gradient(#808080, #808080) 0 5px / 100% 2px no-repeat,
    repeating-linear-gradient(90deg, #000 0 1px, transparent 1px 7px) 0 14px / 100% 3px no-repeat;

  &::-webkit-slider-thumb {
    width: 4px;
    height: 10px;
    margin-top: -6px;
    border: 1px solid #808080;
    appearance: none;
    background: #f0f0f0;
  }
`

const Tools = styled.div`
  display: flex;
`

const ToolIcon = styled.button`
  display: flex;
  align-items: center;
  justify-content: center;
  width: 17px;
  height: 18px;
  background: ${({ $on }) => ($on ? '#fff' : 'transparent')};
  color: #5a5a5a;
  font-size: 14px;
  font-weight: bold;
`

export default App
